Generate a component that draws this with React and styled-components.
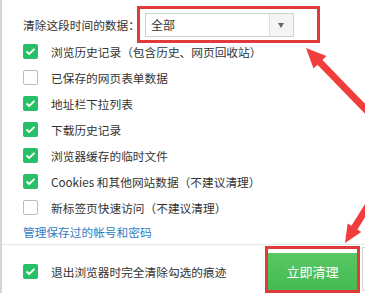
import styled, { createGlobalStyle } from "styled-components";

const Global = createGlobalStyle`
body {
  margin: 0;
  background: #fff;
  font-family: "Noto Sans CJK SC", "Liberation Sans", sans-serif;
}
`

const Panel = styled.div`
position: relative;
width: 365px;
height: 293px;
overflow: hidden;
box-sizing: border-box;
border-left: 2px solid #d6d6d6;
color: #333;
font-size: 11.7px;
`

const Header = styled.div`
display: flex;
align-items: center;
padding: 6px 0 0 21px;
`

const Label = styled.span`
line-height: 16px;
`

const Mark = styled.div`
display: flex;
margin-left: -3px;
padding: 4px 23px 3px 5px;
border: 3px solid #e03a3a;
`

const Select = styled.div`
display: flex;
width: 149px;
height: 24px;
box-sizing: border-box;
border: 1px solid #cfcfcf;
background: #fff;
`

const SelectValue = styled.div`
flex: 1;
padding-left: 5px;
line-height: 22px;
font-size: 12px;
`

const SelectArrow = styled.div`
width: 23px;
display: flex;
align-items: center;
justify-content: center;
border-left: 1px solid #dedede;
background: #f4f4f4;
&::after {
  content: "";
  border-left: 3.5px solid transparent;
  border-right: 3.5px solid transparent;
  border-top: 5px solid #666;
}
`

const List = styled.div`
display: flex;
flex-direction: column;
gap: 10px;
padding-left: 21px;
`

const Row = styled.label`
display: flex;
align-items: center;
height: 16px;
gap: 13px;
`

const Box = styled.span`
width: 15px;
height: 15px;
flex: none;
box-sizing: border-box;
border-radius: 2px;
display: flex;
align-items: center;
justify-content: center;
background: ${p => p.$on ? "#27bf67" : "#fff"};
border: ${p => p.$on ? "none" : "1px solid #bdbdbd"};
`

const Link = styled.a`
display: block;
margin: 9px 0 0 21px;
line-height: 16px;
color: #2f7cc3;
text-decoration: none;
`

const Divider = styled.div`
height: 1px;
margin-top: 4px;
background: #e6e6e6;
`

const Footer = styled.div`
display: flex;
align-items: center;
padding: 0 0 0 21px;
height: 48px;
`

const FooterRow = styled(Row)`
flex: 1;
margin-top: 4px;
`

const ButtonMark = styled.div`
border: 3px solid #e03a3a;
width: 89px;
height: 41px;
flex: none;
display: flex;
`

const Button = styled.button`
flex: 1;
border: none;
border-top: 4px solid #fff;
background: linear-gradient(#58c865, #46ba52);
color: #fff;
font-family: inherit;
font-size: 13px;
padding: 0;
`

const Ghost = styled.div`
margin-left: 2px;
width: 3px;
height: 44px;
flex: none;
box-sizing: border-box;
border: 1px solid #d4d4d4;
border-right: none;
`

const Overlay = styled.svg`
position: absolute;
left: 0;
top: 0;
pointer-events: none;
`

const arrow = (tip, tail, shaft = 7, headLen = 20, headW = 18) => {
    const [tx, ty] = tip
    const dx = tail[0] - tx, dy = tail[1] - ty
    const len = Math.hypot(dx, dy)
    const ux = dx / len, uy = dy / len
    const px = -uy, py = ux
    const bx = tx + ux * headLen, by = ty + uy * headLen
    const pts = [
        [tx, ty],
        [bx + px * headW / 2, by + py * headW / 2],
        [bx + px * shaft / 2, by + py * shaft / 2],
        [tail[0] + px * shaft / 2, tail[1] + py * shaft / 2],
        [tail[0] - px * shaft / 2, tail[1] - py * shaft / 2],
        [bx - px * shaft / 2, by - py * shaft / 2],
        [bx - px * headW / 2, by - py * headW / 2],
    ]
    return pts.map(p => p.join(",")).join(" ")
}

const Check = ({on}) => (
    <Box $on={on}>
        {on && (
            <svg width="11" height="9" viewBox="0 0 11 9">
                <path d="M1.5 4.5 L4.2 7 L9.5 1.8" fill="none" stroke="#fff" strokeWidth="1.8"/>
            </svg>
        )}
    </Box>
)

const items = [
    ["浏览历史记录（包含历史、网页回收站）", true],
    ["已保存的网页表单数据", false],
    ["地址栏下拉列表", true],
    ["下载历史记录", true],
    ["浏览器缓存的临时文件", true],
    ["Cookies 和其他网站数据（不建议清理）", true],
    ["新标签页快速访问（不建议清理）", false],
]

const App = () => {
    return (
        <Panel>
            <Global/>
            <Header>
                <Label>清除这段时间的数据：</Label>
                <Mark>
                    <Select>
                        <SelectValue>全部</SelectValue>
                        <SelectArrow/>
                    </Select>
                </Mark>
            </Header>
            <List>
                {items.map(([text, on]) => (
                    <Row key={text}>
                        <Check on={on}/>
                        <span>{text}</span>
                    </Row>
                ))}
            </List>
            <Link href="#">管理保存过的帐号和密码</Link>
            <Divider/>
            <Footer>
                <FooterRow>
                    <Check on/>
                    <span>退出浏览器时完全清除勾选的痕迹</span>
                </FooterRow>
                <ButtonMark>
                    <Button>立即清理</Button>
                </ButtonMark>
                <Ghost/>
            </Footer>
            <Overlay width="365" height="293">
                <polygon points={arrow([304, 48], [375, 121])} fill="#f23d3d"/>
                <polygon points={arrow([343, 243], [372, 196], 7, 18, 16)} fill="#f23d3d"/>
            </Overlay>
        </Panel>
    )
}

export default App;
